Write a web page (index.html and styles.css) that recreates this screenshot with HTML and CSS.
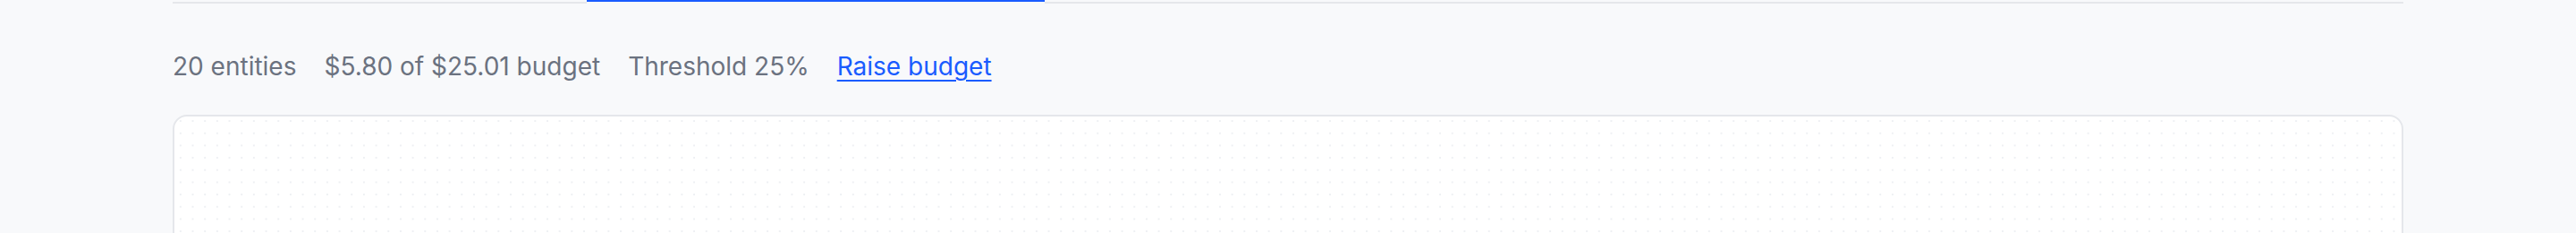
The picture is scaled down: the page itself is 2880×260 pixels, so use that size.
FILE: index.html
```html
<!DOCTYPE html>
<html lang="en">
<head>
<meta charset="utf-8">
<title>Entities</title>
<link rel="stylesheet" href="styles.css">
</head>
<body>
<div class="page">
  <nav class="tabs">
    <div class="tab"></div>
    <div class="tab tab-active"></div>
  </nav>
  <div class="meta">
    <span class="meta-item">20 entities</span>
    <span class="meta-item">$5.80 of $25.01 budget</span>
    <span class="meta-item">Threshold 25%</span>
    <a class="meta-link" href="#">Raise budget</a>
  </div>
  <section class="canvas"></section>
</div>
</body>
</html>
```

FILE: styles.css
```css
html, body {
  margin: 0;
  padding: 0;
  background: #f8f9fb;
  font-family: Inter, "Noto Sans", "Liberation Sans", sans-serif;
  overflow: hidden;
}

.page {
  padding: 0 193px;
}

.tabs {
  display: flex;
  height: 2px;
  border-bottom: 2px solid #e5e7eb;
}

.tab {
  width: 463px;
}

.tab-active {
  width: 512px;
  height: 2px;
  background: #1a5cff;
  border-bottom: 2px solid #f8f9fb;
}

.meta {
  display: flex;
  align-items: baseline;
  gap: 31px;
  margin-top: 50px;
  font-size: 28px;
  line-height: 40px;
  color: #6b7280;
}

.meta-link {
  color: #1a5cff;
  text-decoration: underline;
  text-decoration-thickness: 2px;
  text-underline-offset: 5px;
}

.canvas {
  margin-top: 34px;
  height: 400px;
  border: 2px solid #e5e7eb;
  border-radius: 16px;
  background-color: #ffffff;
  background-image: radial-gradient(circle, #eef0f3 0.9px, transparent 1.2px);
  background-size: 13.68px 13.68px;
  background-position: 0 -1.8px;
}
```
